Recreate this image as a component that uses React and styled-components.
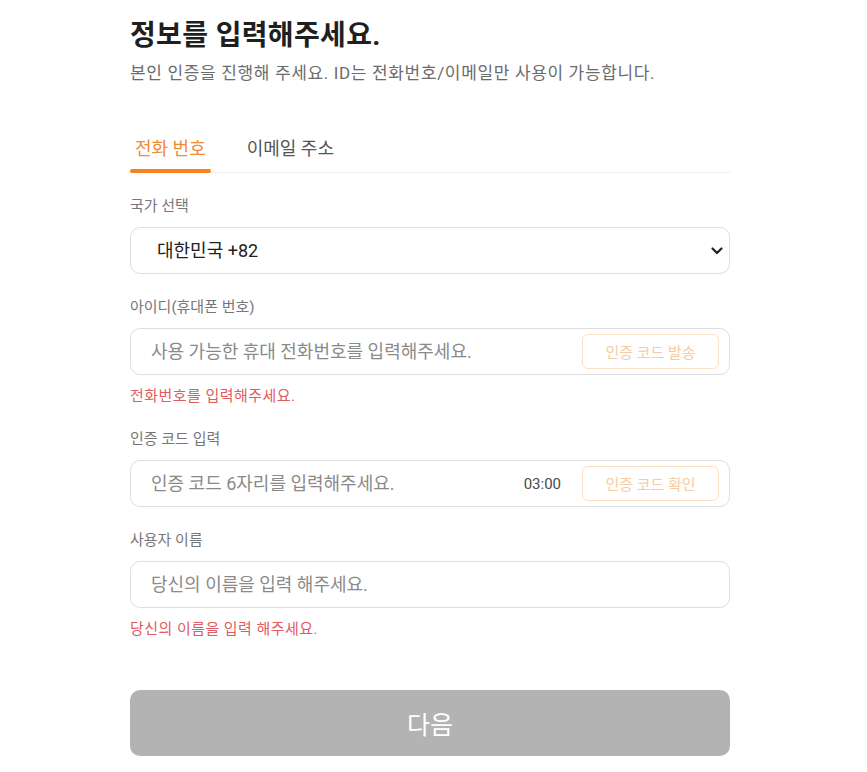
import React, { useState } from 'react';
import styled, { createGlobalStyle } from 'styled-components';

const GlobalStyle = createGlobalStyle`
  * { box-sizing: border-box; }
  body {
    margin: 0;
    background: #fff;
    font-family: Roboto, 'Noto Sans CJK KR', sans-serif;
  }
`;

const Page = styled.div`
  width: 600px;
  margin-left: 130px;
  padding-top: 18px;
  padding-bottom: 16px;
`;

const Title = styled.h1`
  margin: 0;
  font-size: 28px;
  line-height: 36px;
  font-weight: 700;
  color: #1f1f1f;
  letter-spacing: 0.35px;
`;

const Subtitle = styled.p`
  margin: 7px 0 0;
  font-size: 17px;
  line-height: 24px;
  color: #6b6b6b;
  letter-spacing: 0.65px;
`;

const TabBar = styled.div`
  display: flex;
  gap: 31px;
  margin-top: 51px;
  border-bottom: 1px solid #eeeeee;
`;

const Tab = styled.button`
  position: relative;
  border: none;
  background: none;
  padding: 0 5px 10px;
  font-family: inherit;
  font-size: 18px;
  line-height: 26px;
  cursor: pointer;
  color: ${p => (p.$active ? '#f08a36' : '#555')};

  &::after {
    content: '';
    display: ${p => (p.$active ? 'block' : 'none')};
    position: absolute;
    left: 0;
    right: 0;
    bottom: -1px;
    height: 4px;
    border-radius: 2px;
    background: #f7821b;
  }
`;

const Form = styled.div`
  display: flex;
  flex-direction: column;
  gap: 22px;
  margin-top: 22px;
`;

const Field = styled.div`
  display: flex;
  flex-direction: column;
`;

const Label = styled.label`
  font-size: 15px;
  line-height: 22px;
  color: #777;
  margin-bottom: 10px;
`;

const SelectWrap = styled.div`
  position: relative;
`;

const Select = styled.select`
  display: block;
  appearance: none;
  height: 47px;
  width: 100%;
  border: 1px solid #dedede;
  border-radius: 10px;
  background: #fff;
  padding: 0 36px 0 26px;
  font-family: inherit;
  font-size: 18px;
  color: #222;
  outline: none;
`;

const Chevron = styled.svg`
  position: absolute;
  right: 7px;
  top: 50%;
  width: 12px;
  height: 8px;
  margin-top: -4px;
  pointer-events: none;
`;

const InputBox = styled.div`
  display: flex;
  align-items: center;
  height: 47px;
  border: 1px solid #dedede;
  border-radius: 10px;
  padding: 0 10px 0 20px;
`;

const Input = styled.input`
  flex: 1;
  min-width: 0;
  border: none;
  outline: none;
  background: transparent;
  font-family: inherit;
  font-size: 18px;
  color: #222;
  padding: 0;

  &::placeholder {
    color: #8a8a8a;
  }
`;

const Timer = styled.span`
  font-size: 15px;
  color: #4a4a4a;
  margin-right: 21px;
`;

const CodeButton = styled.button`
  flex: none;
  width: 137px;
  height: 35px;
  border: 1px solid #fbe0c6;
  border-radius: 6px;
  background: #fff;
  font-family: inherit;
  font-size: 15px;
  color: #f6cba3;
  cursor: default;
`;

const Error = styled.p`
  margin: 11px 0 0;
  font-size: 15px;
  line-height: 20px;
  letter-spacing: 0.45px;
  color: #e25b60;
`;

const NextButton = styled.button`
  width: 100%;
  height: 66px;
  margin-top: 51px;
  border: none;
  border-radius: 10px;
  background: #b3b3b3;
  color: #fff;
  font-family: inherit;
  font-size: 25px;
  cursor: default;
`;

export default function App() {
  const [tab, setTab] = useState('phone');

  return (
    <>
      <GlobalStyle />
      <Page>
        <Title>정보를 입력해주세요.</Title>
        <Subtitle>본인 인증을 진행해 주세요. ID는 전화번호/이메일만 사용이 가능합니다.</Subtitle>

        <TabBar>
          <Tab $active={tab === 'phone'} onClick={() => setTab('phone')}>전화 번호</Tab>
          <Tab $active={tab === 'email'} onClick={() => setTab('email')}>이메일 주소</Tab>
        </TabBar>

        <Form>
          <Field>
            <Label>국가 선택</Label>
            <SelectWrap>
              <Select defaultValue="82">
                <option value="82">대한민국 +82</option>
                <option value="1">미국 +1</option>
                <option value="81">일본 +81</option>
              </Select>
              <Chevron viewBox="0 0 12 8">
                <path d="M1.5 1.5 L6 6 L10.5 1.5" fill="none" stroke="#222" strokeWidth="2.2" strokeLinecap="round" strokeLinejoin="round" />
              </Chevron>
            </SelectWrap>
          </Field>

          <Field>
            <Label>아이디(휴대폰 번호)</Label>
            <InputBox>
              <Input placeholder="사용 가능한 휴대 전화번호를 입력해주세요." />
              <CodeButton>인증 코드 발송</CodeButton>
            </InputBox>
            <Error>전화번호를 입력해주세요.</Error>
          </Field>

          <Field>
            <Label>인증 코드 입력</Label>
            <InputBox>
              <Input placeholder="인증 코드 6자리를 입력해주세요." />
              <Timer>03:00</Timer>
              <CodeButton>인증 코드 확인</CodeButton>
            </InputBox>
          </Field>

          <Field>
            <Label>사용자 이름</Label>
            <InputBox>
              <Input placeholder="당신의 이름을 입력 해주세요." />
            </InputBox>
            <Error>당신의 이름을 입력 해주세요.</Error>
          </Field>
        </Form>

        <NextButton disabled>다음</NextButton>
      </Page>
    </>
  );
}
